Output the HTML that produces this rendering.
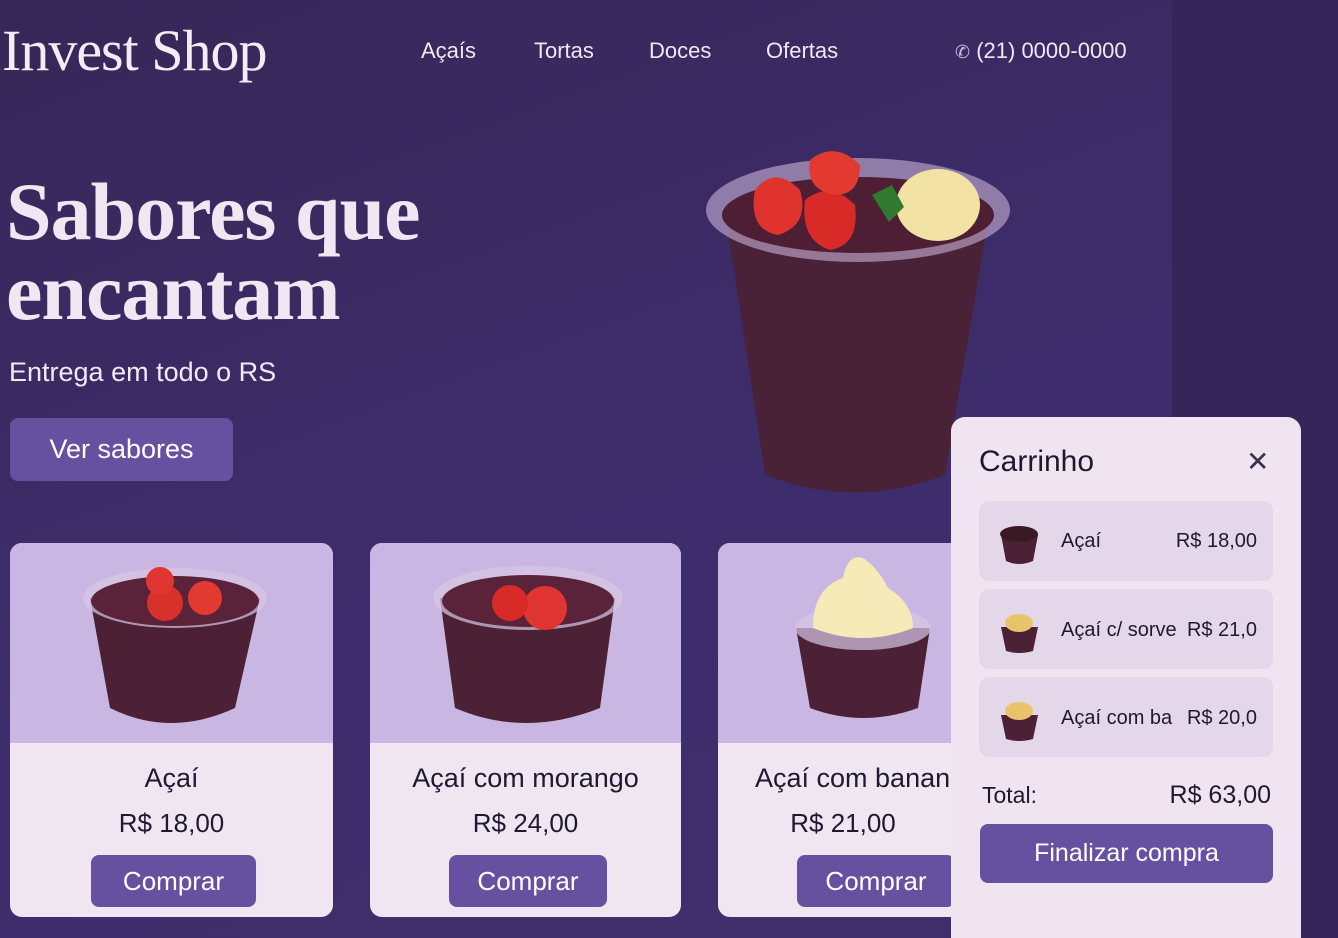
<!DOCTYPE html>
<html><head><meta charset="utf-8"><style>
*{margin:0;padding:0;box-sizing:border-box}
html,body{width:1338px;height:938px;overflow:hidden}
body{background:#3b2b66;font-family:"Liberation Sans",sans-serif;position:relative}
.bg{position:absolute;left:0;top:0;width:1172px;height:938px;background:linear-gradient(160deg,#362758 0%,#3e2d6c 55%,#3f2e6c 100%)}
.strip{position:absolute;left:1172px;top:0;width:166px;height:938px;background:#34255a}
.abs{position:absolute}
.logo{left:2px;top:17px;font-family:"Liberation Serif",serif;font-size:58px;color:#f2ecf5;letter-spacing:-1px}
.nav{top:38px;font-size:22px;color:#efe8f5}
h1{position:absolute;left:6px;top:172px;font-family:"Liberation Serif",serif;font-weight:bold;font-size:82px;line-height:80px;color:#efe8f2;letter-spacing:-1px}
.sub{left:9px;top:357px;font-size:27px;color:#f0eaf5}
.btn{background:#6650a0;color:#fff;border-radius:8px;text-align:center}
.card{top:543px;height:374px;background:#efe6f2;border-radius:12px;overflow:hidden}
.card .img{height:200px;background:#cab6e2;position:relative}
.card .t{text-align:center;font-size:27px;color:#1f1930;margin-top:20px}
.card .p{text-align:center;font-size:26px;color:#1f1930;margin-top:14px}
.card .b{position:absolute;bottom:10px;height:52px;font-size:26px;line-height:52px}
.cart{left:951px;top:417px;width:350px;height:521px;background:#efe4f0;border-radius:14px 14px 0 0}
.item{position:absolute;left:28px;width:294px;height:80px;background:#e4d7ea;border-radius:10px;font-size:20px;color:#1f1930}
</style></head><body>
<div class="bg"></div><div class="strip"></div>
<div class="abs logo">Invest Shop</div>
<div class="abs nav" style="left:421px">Açaís</div>
<div class="abs nav" style="left:534px">Tortas</div>
<div class="abs nav" style="left:649px">Doces</div>
<div class="abs nav" style="left:766px">Ofertas</div>
<div class="abs nav" style="left:955px"><span style="font-size:18px;color:#cfc3e0">✆</span>&nbsp;(21) 0000-0000</div>
<h1>Sabores que<br>encantam</h1>
<div class="abs sub">Entrega em todo o RS</div>
<div class="abs btn" style="left:10px;top:418px;width:223px;height:63px;line-height:63px;font-size:27px">Ver sabores</div>

<svg class="abs" style="left:700px;top:140px" width="320" height="360">
<path d="M25 70 L65 335 Q155 370 245 335 L290 70 Z" fill="#4a2238"/>
<ellipse cx="158" cy="70" rx="152" ry="52" fill="#c9b3d6" opacity=".6"/>
<ellipse cx="158" cy="75" rx="136" ry="38" fill="#4e1f34"/>
<path d="M55 50 q20-25 45 0 q10 35-22 45 q-30-5-23-45z" fill="#e0332d"/>
<path d="M105 60 q25-20 50 5 q5 40-25 45 q-30-10-25-50z" fill="#d82a27"/>
<path d="M110 20 q25-20 50 5 q0 30-25 30 q-30-5-25-35z" fill="#e23a30"/>
<ellipse cx="238" cy="65" rx="42" ry="36" fill="#f2e2a4"/>
<path d="M172 55 l20 -10 l12 22 l-15 15z" fill="#2f7a2e"/>
</svg>

<div class="abs card" style="left:10px;width:323px"><div class="img">
<svg width="323" height="200"><path d="M80 55 L100 165 Q160 195 225 165 L250 55Z" fill="#4c2136"/><ellipse cx="165" cy="55" rx="92" ry="30" fill="#d9c7e6" opacity=".7"/><ellipse cx="165" cy="58" rx="84" ry="25" fill="#5a2339"/><circle cx="155" cy="60" r="18" fill="#d8302a"/><circle cx="195" cy="55" r="17" fill="#e23a30"/><circle cx="150" cy="38" r="14" fill="#e03530"/></svg></div>
<div class="t">Açaí</div><div class="p">R$ 18,00</div><div class="abs btn b" style="left:81px;width:165px">Comprar</div></div>

<div class="abs card" style="left:370px;width:311px"><div class="img">
<svg width="311" height="200"><path d="M70 55 L85 165 Q155 195 230 165 L245 55Z" fill="#4c2136"/><ellipse cx="158" cy="55" rx="95" ry="32" fill="#d9c7e6" opacity=".7"/><ellipse cx="158" cy="58" rx="86" ry="26" fill="#5a2339"/><circle cx="175" cy="65" r="22" fill="#e03530"/><circle cx="140" cy="60" r="18" fill="#d82a27"/></svg></div>
<div class="t">Açaí com morango</div><div class="p">R$ 24,00</div><div class="abs btn b" style="left:79px;width:158px">Comprar</div></div>

<div class="abs card" style="left:718px;width:260px"><div class="img">
<svg width="260" height="200"><path d="M78 85 L92 165 Q145 185 200 165 L212 85Z" fill="#4c2136"/><ellipse cx="145" cy="85" rx="68" ry="22" fill="#d9c7e6" opacity=".7"/><path d="M95 85 q0-40 30-50 q5-25 20-20 q15 10 25 30 q25 15 25 40 q-50 20-100 0z" fill="#f5eab8"/></svg></div>
<div class="t" style="text-align:left;padding-left:37px;white-space:nowrap">Açaí com banana</div><div class="p" style="margin-left:-10px">R$ 21,00</div><div class="abs btn b" style="left:79px;width:158px">Comprar</div></div>

<div class="abs cart">
<div class="abs" style="left:28px;top:28px;font-size:30px;color:#1f1930">Carrinho</div>
<div class="abs" style="left:295px;top:28px;font-size:28px;color:#3a3050">✕</div>
<div class="item" style="top:84px"><svg class="abs" style="left:18px;top:20px" width="46" height="46"><path d="M4 14 L9 40 Q22 46 36 40 L41 14Z" fill="#4c2136"/><ellipse cx="22" cy="13" rx="19" ry="8" fill="#3a1a22"/></svg><span class="abs" style="left:82px;top:29px">Açaí</span><span class="abs" style="right:16px;top:29px">R$ 18,00</span></div>
<div class="item" style="top:172px"><svg class="abs" style="left:18px;top:20px" width="46" height="46"><path d="M4 18 L9 42 Q22 46 36 42 L41 18Z" fill="#4c2136"/><ellipse cx="22" cy="14" rx="14" ry="9" fill="#e8c36a"/></svg><span class="abs" style="left:82px;top:30px">Açaí c/ sorve</span><span class="abs" style="right:16px;top:30px">R$ 21,0</span></div>
<div class="item" style="top:260px"><svg class="abs" style="left:18px;top:20px" width="46" height="46"><path d="M4 18 L9 42 Q22 46 36 42 L41 18Z" fill="#4c2136"/><ellipse cx="22" cy="14" rx="14" ry="9" fill="#e8c36a"/></svg><span class="abs" style="left:82px;top:30px">Açaí com ba</span><span class="abs" style="right:16px;top:30px">R$ 20,0</span></div>
<div class="abs" style="left:31px;top:365px;font-size:23px;color:#1f1930">Total:</div>
<div class="abs" style="right:30px;top:364px;font-size:25px;color:#1f1930">R$ 63,00</div>
<div class="abs btn" style="left:29px;top:407px;width:293px;height:59px;line-height:59px;font-size:25px">Finalizar compra</div>
</div>
</body></html>
